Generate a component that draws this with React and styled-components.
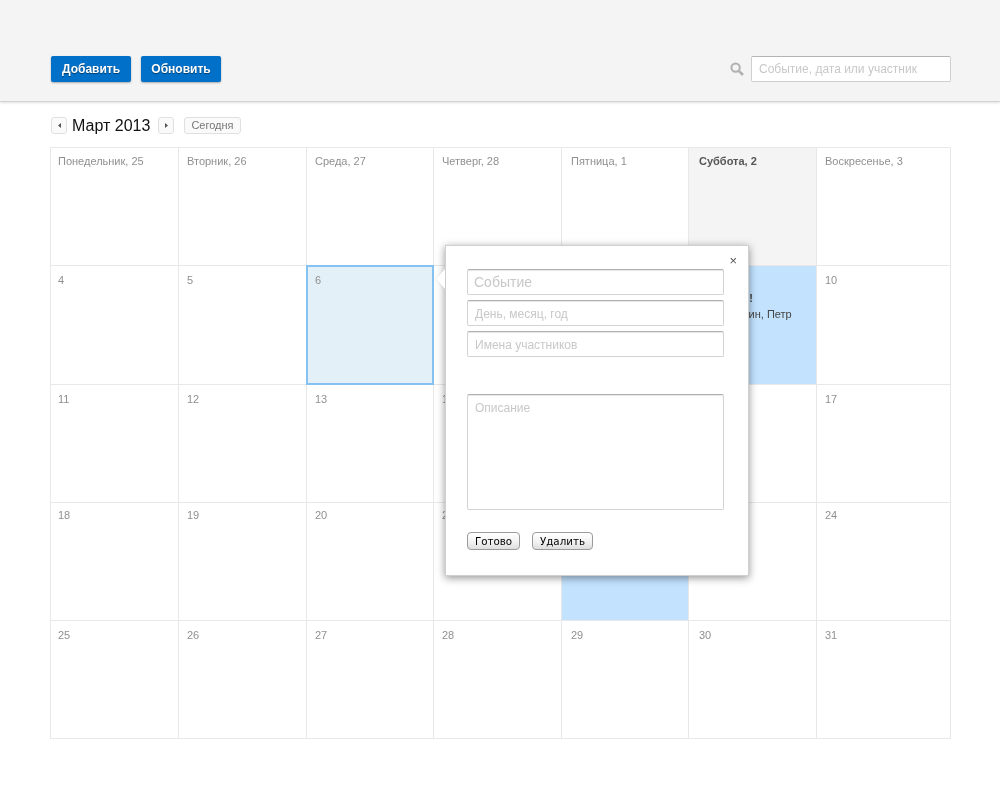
import React from "react";
import styled, { createGlobalStyle } from "styled-components";

const Global = createGlobalStyle`
  html, body { margin: 0; padding: 0; background: #fff; }
  body { font-family: "Liberation Sans", Arial, sans-serif; font-size: 12px; color: #999; }
  * { box-sizing: border-box; }
`;

const Page = styled.div`
  position: relative;
  width: 1000px;
  height: 803px;
  overflow: hidden;
  will-change: transform;
`;

const Toolbar = styled.header`
  height: 102px;
  background: #f4f4f4;
  border-bottom: 1px solid #d2d2d2;
  box-shadow: 0 1px 2px rgba(0, 0, 0, 0.12);
  padding: 56px 49px 0 51px;
  display: flex;
  align-items: flex-start;
  justify-content: space-between;
`;

const Group = styled.div`
  display: flex;
  align-items: center;
  gap: ${(p) => p.$gap || 10}px;
`;

const PrimaryButton = styled.button`
  width: 80px;
  height: 26px;
  padding: 0;
  border: 0;
  border-radius: 2px;
  background: #0070c8;
  box-shadow: 0 1px 2px rgba(0, 0, 0, 0.3);
  color: #fff;
  font: bold 12px "Liberation Sans", Arial, sans-serif;
  text-shadow: 0 1px 1px rgba(0, 0, 0, 0.45);
`;

const SearchBox = styled.div`
  width: 200px;
  height: 26px;
  background: #fff;
  border: 1px solid #cfcfcf;
  border-top-color: #b4b4b4;
  border-radius: 2px;
  padding: 0 7px;
  line-height: 24px;
  font-size: 12px;
  color: #c8c8c8;
`;

const Nav = styled.div`
  height: 45px;
  padding: 15px 0 0 51px;
  display: flex;
  align-items: flex-start;
`;

const ArrowButton = styled.button`
  width: 16px;
  height: 17px;
  padding: 0;
  border: 1px solid #e0e0e0;
  border-radius: 3px;
  background: #fafafa;
  display: flex;
  align-items: center;
  justify-content: center;
`;

const Month = styled.h1`
  margin: -1px 8px 0 5px;
  width: 78px;
  font: normal 16px/20px "Liberation Sans", Arial, sans-serif;
  color: #111;
  white-space: nowrap;
`;

const TodayButton = styled.button`
  width: 57px;
  height: 17px;
  margin-left: 10px;
  padding: 0 0 1px;
  border: 1px solid #e0e0e0;
  border-radius: 3px;
  background: #fafafa;
  color: #777;
  font: 11px/14px "Liberation Sans", Arial, sans-serif;
`;

const Grid = styled.div`
  margin-left: 50px;
  width: 901px;
  display: grid;
  grid-template-columns: 128px 128px 127px 128px 127px 128px 134px;
  grid-template-rows: 118px 119px 118px 118px 118px;
  border-top: 1px solid #e8e8e8;
  border-left: 1px solid #e8e8e8;
`;

const Cell = styled.div`
  border-right: 1px solid #e8e8e8;
  border-bottom: 1px solid #e8e8e8;
  padding: ${(p) => p.$top}px 0 0 ${(p) => p.$left}px;
  line-height: 14px;
  font-size: 11px;
  color: #909090;
  white-space: nowrap;
  overflow: hidden;
  background: ${(p) => (p.$today ? "#f4f4f4" : p.$event ? "#c2e2fe" : "transparent")};
  font-weight: ${(p) => (p.$today ? "bold" : "normal")};
  ${(p) => p.$today && "color: #555;"}
  ${(p) =>
    p.$selected &&
    `
    background: #e3f0f8;
    outline: 2px solid #85c2f2;
    outline-offset: -2px;
    margin: -1px 0 0 -1px;
    padding-top: ${p.$top + 1}px;
    padding-left: ${p.$left + 1}px;
  `}
`;

const EventTitle = styled.div`
  margin: 4px 0 0 -2px;
  font-size: 11px;
  font-weight: bold;
  line-height: 14px;
  color: #444;
`;

const EventPeople = styled.div`
  margin-left: -1px;
  font-size: 11px;
  line-height: 18px;
  color: #444;
  white-space: normal;
`;

const Popover = styled.div`
  position: absolute;
  left: 445px;
  top: 245px;
  width: 304px;
  height: 331px;
  background: #fff;
  border: 1px solid #cfcfcf;
  box-shadow: 0 2px 8px rgba(0, 0, 0, 0.42);
  padding: 23px 25px 0 21px;
  display: flex;
  flex-direction: column;
`;

const Beak = styled.div`
  position: absolute;
  left: -10px;
  top: 23px;
  width: 0;
  height: 0;
  border-style: solid;
  border-width: 10px 9px 10px 0;
  border-color: transparent #fff transparent transparent;
  filter: drop-shadow(-1px 0 1px rgba(0, 0, 0, 0.08));
`;

const Close = styled.div`
  position: absolute;
  right: 11px;
  top: 8px;
  font: 13px/14px "Liberation Sans", Arial, sans-serif;
  color: #555;
`;

const Field = styled.div`
  width: 257px;
  height: ${(p) => p.$h || 26}px;
  margin-bottom: ${(p) => p.$mb ?? 5}px;
  padding: ${(p) => (p.$multi ? "6px 7px 0" : p.$large ? "0 6px" : "1px 7px 0")};
  background: #fff;
  border: 1px solid #d3d3d3;
  border-top: 1px solid #b0b0b0;
  border-radius: 2px;
  box-shadow: inset 0 1px 1px rgba(0, 0, 0, 0.1);
  font-size: ${(p) => (p.$large ? 14 : 12)}px;
  line-height: ${(p) => (p.$multi ? "14px" : "24px")};
  color: #c8c8c8;
`;

const Actions = styled.div`
  display: flex;
  gap: 12px;
  margin-top: 22px;
`;

const FormButton = styled.button`
  height: 18px;
  width: ${(p) => p.$w}px;
  padding: 0;
  border: 1px solid #9b9b9b;
  border-radius: 4px;
  background: linear-gradient(#ffffff, #f2f2f2 55%, #dedede);
  color: #000;
  font: 10.3px/16px "DejaVu Sans", Verdana, sans-serif;
`;

const columnPad = [7, 8, 8, 8, 9, 10, 8];
const head = ["Понедельник, 25", "Вторник, 26", "Среда, 27", "Четверг, 28", "Пятница, 1", "Суббота, 2", "Воскресенье, 3"];
const weeks = [
  [4, 5, 6, 7, 8, 9, 10],
  [11, 12, 13, 14, 15, 16, 17],
  [18, 19, 20, 21, 22, 23, 24],
  [25, 26, 27, 28, 29, 30, 31],
];

export default function App() {
  return (
    <Page>
      <Global />
      <Toolbar>
        <Group>
          <PrimaryButton>Добавить</PrimaryButton>
          <PrimaryButton>Обновить</PrimaryButton>
        </Group>
        <Group $gap={7}>
          <svg width="14" height="14" viewBox="0 0 14 14" fill="none" stroke="#b0b0b0">
            <circle cx="5.6" cy="5.6" r="4.2" strokeWidth="2" />
            <path d="M8.8 8.8l4.2 4.2" strokeWidth="2.6" />
          </svg>
          <SearchBox>Событие, дата или участник</SearchBox>
        </Group>
      </Toolbar>
      <Nav>
        <ArrowButton aria-label="Назад">
          <svg width="3" height="5" viewBox="0 0 3 5"><path d="M3 0v5L0 2.5z" fill="#555" /></svg>
        </ArrowButton>
        <Month>Март 2013</Month>
        <ArrowButton aria-label="Вперёд">
          <svg width="3" height="5" viewBox="0 0 3 5"><path d="M0 0v5L3 2.5z" fill="#555" /></svg>
        </ArrowButton>
        <TodayButton>Сегодня</TodayButton>
      </Nav>
      <Grid>
        {head.map((h, i) => (
          <Cell key={h} $top={6} $left={columnPad[i]} $today={i === 5}>{h}</Cell>
        ))}
        {weeks.map((week, w) =>
          week.map((d, i) => (
            <Cell
              key={d}
              $top={w === 2 ? 5 : 7}
              $left={columnPad[i]}
              $selected={d === 6}
              $event={d === 9 || d === 22}
            >
              {d}
              {d === 9 && (
                <>
                  <EventTitle>Напиться!</EventTitle>
                  <EventPeople>Витя Костин, Петр Михайлов</EventPeople>
                </>
              )}
            </Cell>
          ))
        )}
      </Grid>
      <Popover>
        <Beak />
        <Close>×</Close>
        <Field $large>Событие</Field>
        <Field>День, месяц, год</Field>
        <Field $mb={37}>Имена участников</Field>
        <Field $h={116} $mb={0} $multi>Описание</Field>
        <Actions>
          <FormButton $w={53}>Готово</FormButton>
          <FormButton $w={61}>Удалить</FormButton>
        </Actions>
      </Popover>
    </Page>
  );
}
